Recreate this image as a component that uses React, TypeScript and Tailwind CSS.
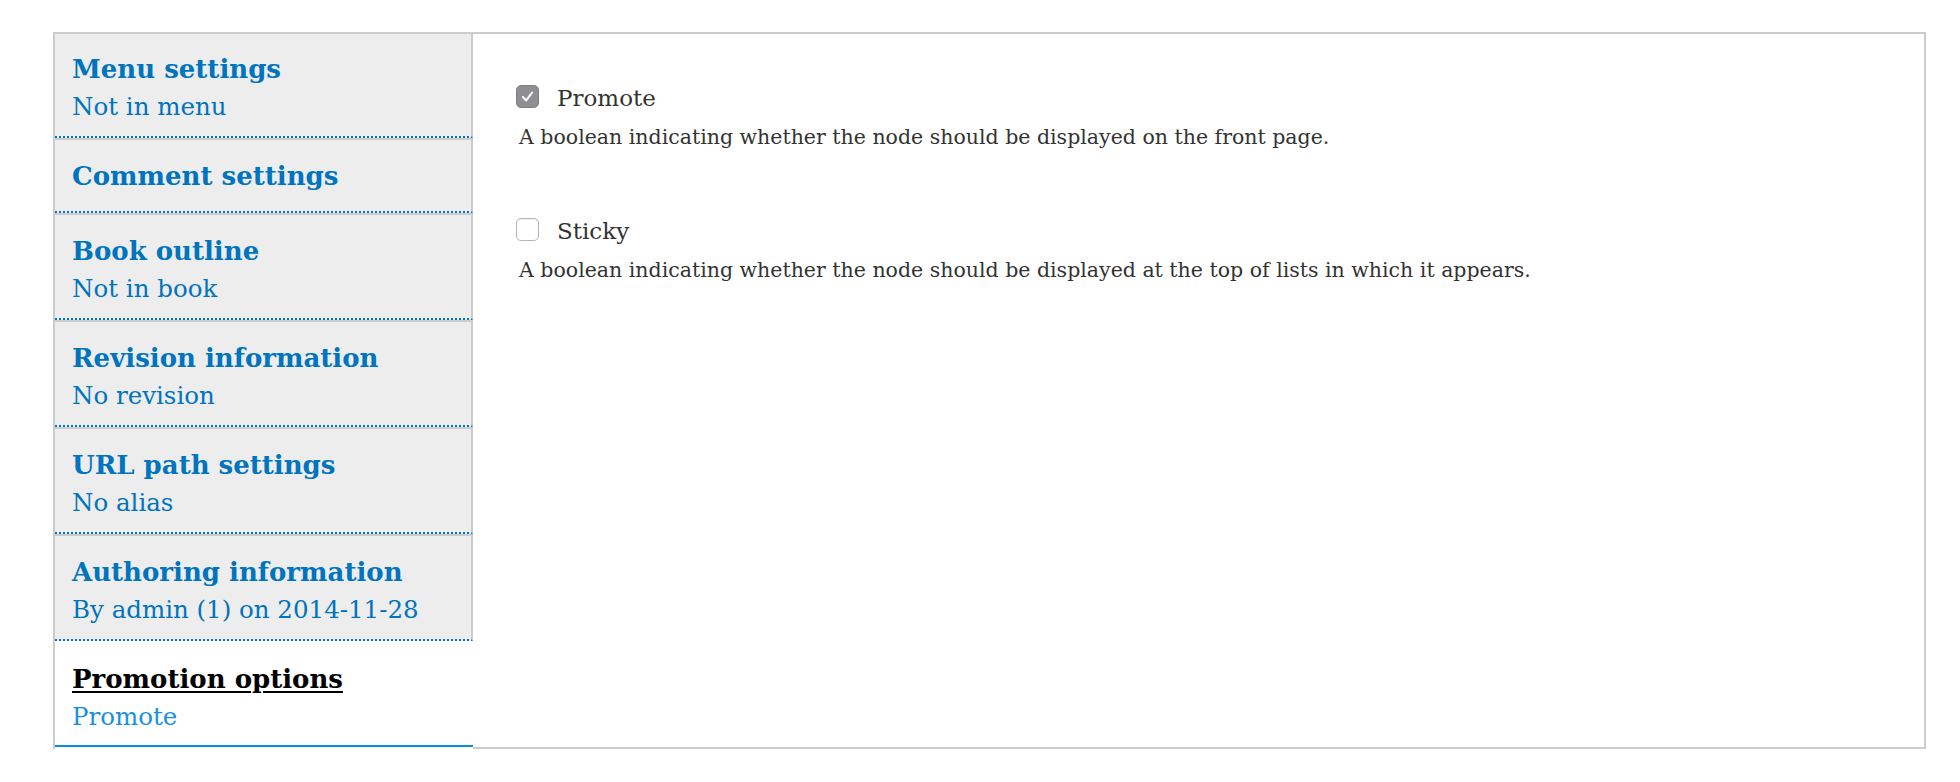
interface Tab {
  title: string;
  summary?: string;
}

const tabs: Tab[] = [
  { title: 'Menu settings', summary: 'Not in menu' },
  { title: 'Comment settings' },
  { title: 'Book outline', summary: 'Not in book' },
  { title: 'Revision information', summary: 'No revision' },
  { title: 'URL path settings', summary: 'No alias' },
  { title: 'Authoring information', summary: 'By admin (1) on 2014-11-28' },
];

function TabItem({ tab, first }: { tab: Tab; first: boolean }) {
  return (
    <li
      className={`border-t-2 border-t-[#cccccc] border-r-2 border-r-[#cccccc] bg-[#ededed] ${first ? 'pt-[13px]' : 'pt-[14px]'} pb-[13px] pl-[17px] border-b-2 border-b-[#0074bd] border-dotted`}
      style={{ borderTopStyle: 'solid', borderRightStyle: 'solid' }}
    >
      <a href="#" className="block text-[#0074bd]">
        <div className="text-[26px] font-bold leading-[44px]">{tab.title}</div>
        {tab.summary && <div className="text-[24.5px] leading-[32px]">{tab.summary}</div>}
      </a>
    </li>
  );
}

function Option({ label, description, checked }: { label: string; description: string; checked: boolean }) {
  return (
    <div>
      <div className="flex h-[30px] items-start">
        <span
          className={`mt-[2px] flex h-[23px] w-[23px] shrink-0 items-center justify-center rounded-[5px] border ${
            checked ? 'border-[#7f7f84] bg-[#8e8e93]' : 'border-[#b5b5b5] bg-white shadow-[inset_0_1px_1px_rgba(0,0,0,0.08)]'
          }`}
        >
          {checked && (
            <svg viewBox="0 0 23 23" className="h-[23px] w-[23px]">
              <polyline
                points="6.5,12 10,15.8 16.5,7.2"
                fill="none"
                stroke="white"
                strokeWidth={2.3}
                strokeLinecap="round"
                strokeLinejoin="round"
              />
            </svg>
          )}
        </span>
        <label className="ml-[18px] text-[23px] leading-[30px] text-[#333333]">{label}</label>
      </div>
      <p className="mt-[11px] pl-[3px] text-[20.5px] leading-[26px] text-[#333333]">{description}</p>
    </div>
  );
}

export default function App() {
  return (
    <div className="min-h-screen bg-white pt-[32px] pl-[53px] pr-[34px] font-['DejaVu_Serif',serif]">
      <div className="flex">
        <ul className="w-[420px] shrink-0 border-l-2 border-[#cccccc] pb-[2px]">
          {tabs.map((t, i) => (
            <TabItem key={t.title} tab={t} first={i === 0} />
          ))}
          <li className="border-t-2 border-t-white border-b-2 border-b-[#0a8ddd] bg-white pt-[14px] pb-[12px] pl-[17px]">
            <a href="#" className="block">
              <div className="text-[26px] font-bold leading-[44px] text-black underline decoration-2 underline-offset-[3px]">
                Promotion options
              </div>
              <div className="text-[24.5px] leading-[32px] text-[#1a90e0]">Promote</div>
            </a>
          </li>
        </ul>
        <div className="flex-1 border-t-2 border-r-2 border-b-2 border-[#cccccc] pt-[49px] pl-[43px]">
          <Option
            label="Promote"
            checked
            description="A boolean indicating whether the node should be displayed on the front page."
          />
          <div className="mt-[66px]">
            <Option
              label="Sticky"
              checked={false}
              description="A boolean indicating whether the node should be displayed at the top of lists in which it appears."
            />
          </div>
        </div>
      </div>
    </div>
  );
}
